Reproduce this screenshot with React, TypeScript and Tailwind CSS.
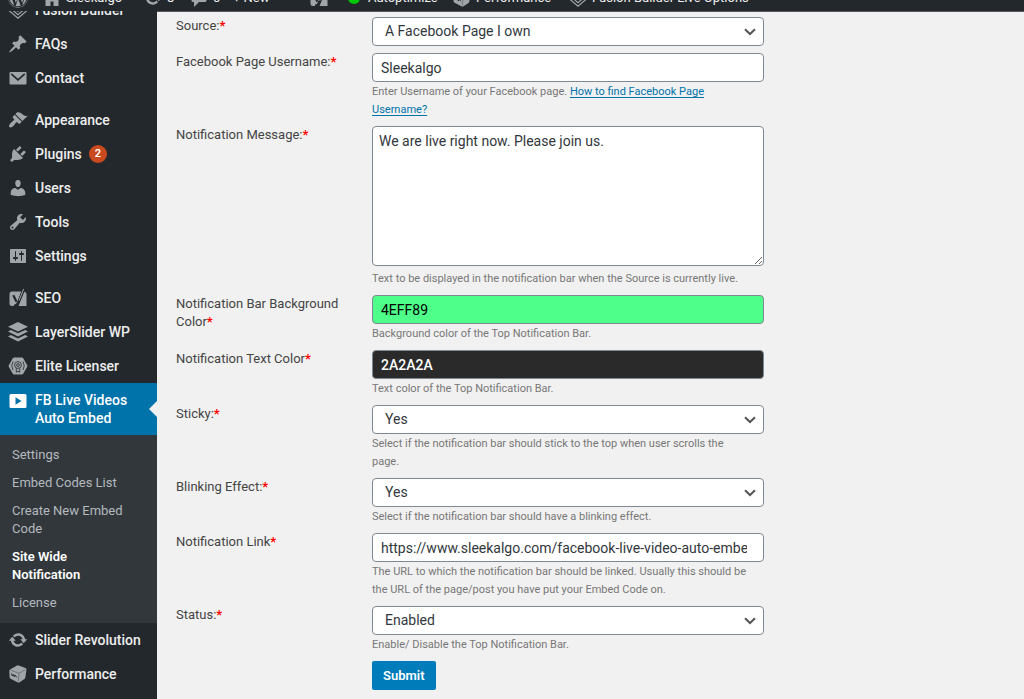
import type { ReactNode } from "react";
import { FaWordpress } from "react-icons/fa";

/* ---------- icons ---------- */

interface IconProps {
  children: ReactNode;
  className?: string;
}

function Icon({ children, className = "text-[#a0a5aa]" }: IconProps) {
  return (
    <svg viewBox="0 0 20 20" fill="currentColor" aria-hidden="true" className={`h-5 w-5 shrink-0 ${className}`}>
      {children}
    </svg>
  );
}

const fusionIcon = (
  <g fill="none" stroke="currentColor" strokeWidth="1.2">
    <path d="M1.5 5.5 10 .8l8.500 4.700v5.500L10 18.200 1.500 11z" />
    <path d="M1.500 7.500 10 14.600l8.500-7.100" />
    <path d="M4.200 6.500 10 11.300l5.800-4.800" />
    <path d="M6.600 5.800 10 8.500l3.400-2.700" />
  </g>
);

const pinIcon = (
  <path d="M10.44 3.02l1.82-1.82 6.36 6.35-1.83 1.82c-1.05-.68-2.48-.57-3.41.36l-.75.75c-.92.93-1.04 2.35-.35 3.41l-1.83 1.82-2.41-2.41-2.8 2.79c-.42.42-3.38 2.71-3.8 2.29s1.86-3.39 2.28-3.81l2.79-2.79L4.1 9.36l1.83-1.82c1.05.69 2.48.57 3.4-.36l.75-.75c.93-.92 1.05-2.35.36-3.41z" />
);

const mailIcon = (
  <>
    <rect x="1.500" y="4" width="17" height="12.500" rx="1" />
    <path d="M3.800 6.300 10 11.800l6.200-5.500" fill="none" stroke="#23282d" strokeWidth="1.700" strokeLinecap="round" />
  </>
);

const brushIcon = (
  <path d="M14.48 11.06L7.41 3.99l1.5-1.5c.5-.56 2.3-.47 3.51.32 1.21.8 1.43 1.28 2.91 2.1 1.18.64 2.45 1.26 4.45.85zm-.71.71L6.7 4.7 4.93 6.47c-.39.39-.39 1.02 0 1.41l1.06 1.06c.39.39.39 1.03 0 1.42-.6.6-1.43 1.11-2.21 1.69-.35.26-.7.53-1.01.84C1.43 14.23.4 16.08 1.4 17.07c.99 1 2.84-.03 4.18-1.36.31-.31.58-.66.85-1.02.57-.78 1.08-1.61 1.69-2.21.39-.39 1.02-.39 1.41 0l1.06 1.06c.39.39 1.02.39 1.41 0z" />
);

const plugIcon = (
  <path d="M13.11 4.36L9.87 7.6 8 5.73l3.24-3.24c.35-.34 1.05-.2 1.56.32.52.51.66 1.21.31 1.55zm-8 1.77l.91-1.12 9.01 9.01-1.19.84c-.71.71-2.63 1.16-3.82 1.16H6.14L4.9 17.26c-.59.59-1.54.59-2.12 0-.59-.58-.59-1.53 0-2.12l1.24-1.24v-3.88c0-1.13.4-3.19 1.09-3.89zm7.26 3.97l3.24-3.24c.34-.35 1.04-.21 1.55.31.52.51.66 1.21.31 1.55l-3.24 3.25z" />
);

const userIcon = (
  <path d="M10 9.25c-2.27 0-2.73-3.44-2.73-3.44C7 4.02 7.82 2 9.97 2c2.16 0 2.98 2.02 2.71 3.81 0 0-.41 3.44-2.68 3.44zm0 2.57L12.72 10c2.39 0 4.52 2.33 4.52 4.53v2.49s-3.65 1.13-7.24 1.13c-3.65 0-7.24-1.13-7.24-1.13v-2.49c0-2.25 1.94-4.48 4.47-4.48z" />
);

const wrenchIcon = (
  <path d="M16.68 9.77c-1.34 1.34-3.3 1.67-4.95.99l-5.41 6.52c-.99.99-2.59.99-3.58 0s-.99-2.59 0-3.57l6.52-5.42c-.68-1.65-.35-3.61.99-4.95 1.28-1.28 3.12-1.62 4.72-1.06l-2.89 2.89 2.82 2.82 2.86-2.87c.53 1.58.18 3.39-1.08 4.65zM3.81 16.21c.4.39 1.04.39 1.43 0 .4-.4.4-1.04 0-1.43-.39-.4-1.03-.4-1.43 0-.39.39-.39 1.03 0 1.43z" />
);

const slidersIcon = (
  <path d="M18 16V4c0-.55-.45-1-1-1H3c-.55 0-1 .45-1 1v12c0 .55.45 1 1 1h14c.55 0 1-.45 1-1zM8 11h1c.55 0 1 .45 1 1s-.45 1-1 1H8v1.5c0 .28-.22.5-.5.5s-.5-.22-.5-.5V13H6c-.55 0-1-.45-1-1s.45-1 1-1h1V5.500c0-.28.22-.5.5-.5s.5.22.5.5V11zm5-2h-1c-.55 0-1-.45-1-1s.45-1 1-1h1V5.500c0-.28.22-.5.5-.5s.5.22.5.5V7h1c.55 0 1 .45 1 1s-.45 1-1 1h-1v5.500c0 .28-.22.5-.5.5s-.5-.22-.5-.5V9z" />
);

const yoastIcon = (
  <>
    <path d="M4 3.500h9.500L8 18H4a2.500 2.500 0 0 1-2.500-2.500V6A2.500 2.500 0 0 1 4 3.500zM16.300 3.800A2.500 2.500 0 0 1 18.500 6v12H10.500z" />
    <path d="M5.300 7.300 8.500 13.800M15.300 1.500 10.300 14.200Q9 17.600 6 17.800" fill="none" stroke="#23282d" strokeWidth="2.200" />
    <path d="M15.600 1 11 12.600" fill="none" stroke="currentColor" strokeWidth="1" />
  </>
);

const layersIcon = (
  <>
    <path d="M10 0l10 4.700-10 4.700L0 4.700z" />
    <path d="M2.800 7.900 10 11.300l7.200-3.400L20 9.500l-10 4.900L0 9.500z" />
    <path d="M2.800 13 10 16.400l7.200-3.400L20 14.600l-10 4.900L0 14.600z" />
  </>
);

const licenserIcon = (
  <>
    <path d="M6 1.500h8q.8 0 1.200.7l4 7q.4.800 0 1.600l-4 7q-.4.700-1.200.7H6q-.8 0-1.200-.7l-4-7q-.4-.8 0-1.600l4-7q.4-.7 1.200-.7z" />
    <g fill="none" stroke="#23282d" strokeWidth=".8">
      <circle cx="10" cy="9" r="3.400" />
      <circle cx="10" cy="9" r="1.400" />
      <path d="M8.300 12.200v4l1.700-1 1.700 1v-4M5 5.500Q2.500 9.500 5 14M15 5.500q2.500 4 0 8.500" />
    </g>
  </>
);

const videoIcon = (
  <>
    <rect x="1.500" y="3" width="17" height="14" rx="1.500" />
    <path d="M7.500 6.200v7.600l6-3.800z" fill="#0073aa" />
  </>
);

const updateIcon = (
  <path d="M10.2 3.28c3.53 0 6.43 2.61 6.92 6h2.08l-3.5 4-3.5-4h2.32c-.45-1.97-2.21-3.45-4.32-3.45-1.45 0-2.73.71-3.54 1.78L4.95 5.66C6.23 4.2 8.11 3.28 10.2 3.28zm-.4 13.44c-3.52 0-6.43-2.61-6.92-6H.8l3.5-4c1.17 1.33 2.33 2.67 3.5 4H5.48c.45 1.97 2.21 3.45 4.32 3.45 1.45 0 2.73-.71 3.54-1.78l1.71 1.95c-1.28 1.46-3.15 2.38-5.25 2.38z" />
);

const cubeIcon = (
  <>
    <path d="M2.500 5.200 9 1.600q.8-.4 1.600-.1l7 2.400q1.100.5.9 1.700l-1.200 8q-.1.800-.8 1.300L11.600 18.300q-.8.500-1.700.1L2.600 14.800q-.9-.5-1-1.500L1.300 6.800q0-1.100 1.200-1.600z" />
    <path d="M3 6.200l8 3.200 6.500-4M11 9.400l-.6 8" fill="none" stroke="#5c6166" strokeWidth=".7" />
    <path d="M3.500 9.500l.8 2.500 1-1.600 1 2.400.8-1.700 1.600 2.200" fill="none" stroke="#23282d" strokeWidth="1" />
  </>
);

const homeIcon = <path d="M10 2 1 10h2.500v8h5v-4.500h3V18h5v-8H19z" />;
const commentIcon = <path d="M4 3h12a1.500 1.500 0 0 1 1.500 1.500v8A1.500 1.500 0 0 1 16 14h-6l-5 5v-5H4a1.500 1.500 0 0 1-1.500-1.500v-8A1.500 1.500 0 0 1 4 3z" />;

/* ---------- top bar ---------- */

function AdminBar() {
  return (
    <header className="flex h-[11px] items-end overflow-hidden bg-[#23282d] text-[13px] text-[#eeeeee]">
      <div className="flex h-[26px] shrink-0 items-center whitespace-nowrap">
        <a href="#wp" aria-label="WordPress" className="flex w-[42px] pl-2">
          <FaWordpress className="h-5 w-5 text-[#a0a5aa]" />
        </a>
        <a href="#site" className="flex w-[101px] items-center gap-1">
          <Icon>{homeIcon}</Icon>Sleekalgo
        </a>
        <a href="#updates" className="flex w-[46px] items-center gap-1">
          <Icon>{updateIcon}</Icon>8
        </a>
        <a href="#comments" className="flex w-[44px] items-center gap-1">
          <Icon>{commentIcon}</Icon>0
        </a>
        <a href="#new" className="w-[76px]">+ New</a>
        <a href="#seo" aria-label="SEO" className="w-[39px]">
          <Icon>{yoastIcon}</Icon>
        </a>
        <a href="#autoptimize" className="flex w-[104px] items-center gap-2">
          <span className="h-3 w-3 rounded-full bg-[#00c800]" />Autoptimize
        </a>
        <a href="#performance" className="flex w-[116px] items-center gap-1">
          <Icon>{cubeIcon}</Icon>Performance
        </a>
        <a href="#options" className="flex items-center gap-1">
          <Icon>{fusionIcon}</Icon>Fusion Builder Live Options
        </a>
      </div>
    </header>
  );
}

/* ---------- sidebar ---------- */

interface MenuItemProps {
  icon: ReactNode;
  label: string;
  count?: number;
}

function MenuItem({ icon, label, count }: MenuItemProps) {
  return (
    <li>
      <a href="#menu" className="flex h-[34px] items-center gap-[7px] pl-2 text-[#eeeeee]">
        <Icon>{icon}</Icon>
        <span className="whitespace-nowrap">{label}</span>
        {count && (
          <span className="flex h-[18px] w-[18px] items-center justify-center rounded-full bg-[#ca4a1f] text-[11px] font-semibold text-white">
            {count}
          </span>
        )}
      </a>
    </li>
  );
}

const subMenu = ["Settings", "Embed Codes List", "Create New Embed Code", "Site Wide Notification", "License"];

function Sidebar() {
  return (
    <nav className="w-[157px] shrink-0 bg-[#23282d] text-[14px] leading-[18px] font-medium">
      <ul>
        <li className="flex h-4 items-end overflow-hidden">
          <a href="#menu" className="flex h-[34px] shrink-0 items-center gap-[7px] pl-2 text-[#eeeeee]">
            <Icon>{fusionIcon}</Icon>Fusion Builder
          </a>
        </li>
        <MenuItem icon={pinIcon} label="FAQs" />
        <MenuItem icon={mailIcon} label="Contact" />
      </ul>
      <ul className="mt-2">
        <MenuItem icon={brushIcon} label="Appearance" />
        <MenuItem icon={plugIcon} label="Plugins" count={2} />
        <MenuItem icon={userIcon} label="Users" />
        <MenuItem icon={wrenchIcon} label="Tools" />
        <MenuItem icon={slidersIcon} label="Settings" />
      </ul>
      <ul className="mt-2">
        <MenuItem icon={yoastIcon} label="SEO" />
        <MenuItem icon={layersIcon} label="LayerSlider WP" />
        <MenuItem icon={licenserIcon} label="Elite Licenser" />
        <li>
          <a href="#fb-live" className="relative flex gap-[7px] bg-[#0073aa] py-2 pl-2 text-white">
            <Icon className="text-white">{videoIcon}</Icon>
            <span className="w-[104px]">FB Live Videos Auto Embed</span>
            {/* arrow pointing at the content */}
            <span className="absolute top-1/2 right-0 -mt-2 border-8 border-l-0 border-transparent border-r-[#f1f1f1]" />
          </a>
          <ul className="bg-[#32373c] pt-[6px] pb-[6px] text-[13px]">
            {subMenu.map((item) => (
              <li key={item}>
                <a
                  href="#sub"
                  className={`block py-[5px] pr-6 pl-3 ${
                    item === "Site Wide Notification" ? "font-semibold text-white" : "font-normal text-[#b4b9be]"
                  }`}
                >
                  {item}
                </a>
              </li>
            ))}
          </ul>
        </li>
        <MenuItem icon={updateIcon} label="Slider Revolution" />
        <MenuItem icon={cubeIcon} label="Performance" />
      </ul>
    </nav>
  );
}

/* ---------- form ---------- */

interface RowProps {
  id: string;
  label: string;
  help?: ReactNode;
  children: ReactNode;
}

function Row({ id, label, help, children }: RowProps) {
  return (
    <div className="flex">
      <label htmlFor={id} className="w-[196px] shrink-0 pr-5 text-[13px] leading-[18px] text-[#444444]">
        {label}
        <span className="font-bold text-[#ff0000]">*</span>
      </label>
      <div className="w-full max-w-[392px]">
        {children}
        {help && <p className="mt-px pr-4 text-[11px] leading-[18px] text-[#777777]">{help}</p>}
      </div>
    </div>
  );
}

interface TextFieldProps {
  id: string;
  value: string;
  className?: string;
}

function TextField({ id, value, className = "bg-white text-[#32373c]" }: TextFieldProps) {
  return (
    <input
      id={id}
      type="text"
      defaultValue={value}
      className={`block h-[29px] w-full rounded border border-[#7e8993] pr-4 pl-2 text-[14px] ${className}`}
    />
  );
}

function SelectField({ id, options }: { id: string; options: string[] }) {
  return (
    <div className="relative">
      <select
        id={id}
        className="block h-[29px] w-full appearance-none rounded border border-[#7e8993] bg-white pr-6 pl-3 text-[14px] text-[#32373c]"
      >
        {options.map((o) => (
          <option key={o}>{o}</option>
        ))}
      </select>
      <svg viewBox="0 0 12 8" className="pointer-events-none absolute top-[11px] right-2 h-2 w-3" fill="none" stroke="#555555" strokeWidth="2">
        <path d="M1 1.200l5 4.800 5-4.800" />
      </svg>
    </div>
  );
}

export default function App() {
  return (
    <div className="flex min-h-screen flex-col bg-[#f1f1f1] font-['Roboto','Liberation_Sans',sans-serif]">
      <AdminBar />
      <div className="flex flex-1">
        <Sidebar />
        <main className="min-w-0 flex-1 border-t border-[#55595d] px-[19px] pt-[5px] pb-2">
          <form className="flex flex-col gap-[7px]" onSubmit={(e) => e.preventDefault()}>
            <Row id="source" label="Source:">
              <SelectField id="source" options={["A Facebook Page I own"]} />
            </Row>
            <Row
              id="username"
              label="Facebook Page Username:"
              help={
                <>
                  Enter Username of your Facebook page.{" "}
                  <a href="#help" className="text-[#0073aa] underline underline-offset-2">
                    How to find Facebook Page Username?
                  </a>
                </>
              }
            >
              <TextField id="username" value="Sleekalgo" />
            </Row>
            <Row
              id="message"
              label="Notification Message:"
              help="Text to be displayed in the notification bar when the Source is currently live."
            >
              <textarea
                id="message"
                defaultValue="We are live right now. Please join us."
                className="mb-1 block h-[140px] w-full rounded border border-[#7e8993] bg-white px-[6px] py-1 text-[14px] leading-5 text-[#32373c]"
              />
            </Row>
            <Row id="bar-color" label="Notification Bar Background Color" help="Background color of the Top Notification Bar.">
              <TextField id="bar-color" value="4EFF89" className="bg-[#4eff89] text-black" />
            </Row>
            <Row id="text-color" label="Notification Text Color" help="Text color of the Top Notification Bar.">
              <TextField id="text-color" value="2A2A2A" className="bg-[#2a2a2a] font-medium text-white" />
            </Row>
            <Row
              id="sticky"
              label="Sticky:"
              help="Select if the notification bar should stick to the top when user scrolls the page."
            >
              <SelectField id="sticky" options={["Yes", "No"]} />
            </Row>
            <Row id="blinking" label="Blinking Effect:" help="Select if the notification bar should have a blinking effect.">
              <SelectField id="blinking" options={["Yes", "No"]} />
            </Row>
            <Row
              id="link"
              label="Notification Link"
              help="The URL to which the notification bar should be linked. Usually this should be the URL of the page/post you have put your Embed Code on."
            >
              <TextField id="link" value="https://www.sleekalgo.com/facebook-live-video-auto-embed/" />
            </Row>
            <Row id="status" label="Status:" help="Enable/ Disable the Top Notification Bar.">
              <SelectField id="status" options={["Enabled", "Disabled"]} />
            </Row>
            <button
              type="submit"
              className="ml-[196px] h-[29px] self-start rounded-xs bg-[#007cba] px-[11px] text-[13px] font-semibold text-white"
            >
              Submit
            </button>
          </form>
        </main>
      </div>
    </div>
  );
}
